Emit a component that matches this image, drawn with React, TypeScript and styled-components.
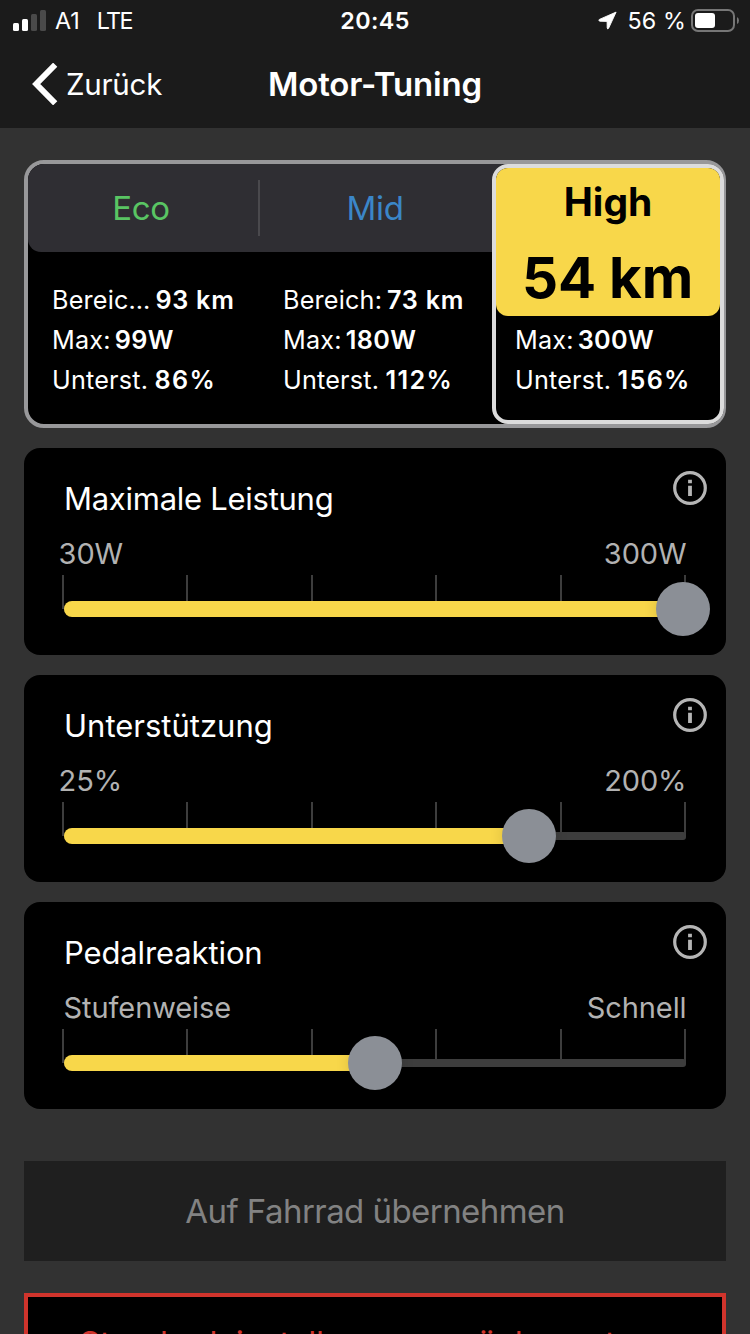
import React from "react";
import styled, { createGlobalStyle } from "styled-components";

const GlobalStyle = createGlobalStyle`
  *, *::before, *::after { box-sizing: border-box; }
  html, body { margin: 0; padding: 0; background: #323232; }
  body {
    height: 1334px;
    overflow: hidden;
    font-family: Inter, "Liberation Sans", sans-serif;
    color: #fff;
    -webkit-font-smoothing: antialiased;
  }
  button { font: inherit; color: inherit; border: 0; background: none; padding: 0; }
`;

const Screen = styled.div`
  width: 750px;
  height: 1334px;
  overflow: hidden;
  display: flex;
  flex-direction: column;
  background: #323232;
  white-space: nowrap;
`;

const Header = styled.header`
  flex: none;
  height: 128px;
  background: #1b1b1b;
`;

const StatusBar = styled.div`
  display: grid;
  grid-template-columns: 1fr auto 1fr;
  height: 41px;
  line-height: 41px;
  font-size: 23.3px;
  padding: 0 11px 0 13px;
`;

const Carrier = styled.div`
  display: flex;
  align-items: center;
`;

const SignalIcon = styled.svg`
  margin: 0 9px 1px 0;
`;

const Network = styled.span`
  margin-left: 17px;
  letter-spacing: -1.6px;
`;

const Clock = styled.div`
  padding-right: 2px;
  font-weight: 600;
  letter-spacing: 0.4px;
`;

const Power = styled.div`
  display: flex;
  align-items: center;
  justify-content: flex-end;
`;

const Percent = styled.span`
  margin: 0 5px 0 11px;
  letter-spacing: 0.1px;
`;

const NavBar = styled.nav`
  display: grid;
  grid-template-columns: 1fr auto 1fr;
  align-items: center;
  height: 86px;
  padding: 0 32px;
`;

const BackButton = styled.button`
  display: flex;
  align-items: center;
  gap: 8px;
  font-size: 29.5px;
  letter-spacing: -0.25px;
`;

const Title = styled.h1`
  margin: 0;
  font-size: 33px;
  font-weight: 600;
  letter-spacing: -0.15px;
`;

const Content = styled.main`
  display: flex;
  flex-direction: column;
  padding: 32px 24px 0;
`;

const ModePanel = styled.section`
  flex: none;
  display: grid;
  grid-template-columns: 232px 232px 232px;
  height: 268px;
  border: 4px solid #98989a;
  border-radius: 20px;
  background: #000;
`;

const ModeColumn = styled.div`
  display: flex;
  flex-direction: column;
`;

const ModeTab = styled.button<{ $color: string; $first?: boolean }>`
  position: relative;
  height: 88px;
  padding-right: ${(p) => (p.$first ? "6px" : "2px")};
  border-radius: ${(p) => (p.$first ? "16px 0 0 13px" : "0")};
  background: #2f2e33;
  color: ${(p) => p.$color};
  font-size: 33px;
  letter-spacing: -0.3px;
  text-align: center;

  &::after {
    content: "";
    display: ${(p) => (p.$first ? "block" : "none")};
    position: absolute;
    top: 16px;
    right: 0;
    width: 2px;
    height: 56px;
    background: #4a494d;
  }
`;

const StatList = styled.div<{ $indent: number; $top: number }>`
  display: flex;
  flex-direction: column;
  padding: ${(p) => p.$top}px 0 0 ${(p) => p.$indent}px;
  font-size: 25.2px;
  line-height: 40px;
`;

const Stat = styled.div<{ $gap: number }>`
  display: flex;
  gap: ${(p) => p.$gap}px;
  letter-spacing: 0.2px;
`;

const StatValue = styled.strong<{ $tracking: number }>`
  font-weight: 600;
  letter-spacing: ${(p) => p.$tracking}px;
`;

const ActiveColumn = styled.div`
  display: flex;
  flex-direction: column;
  border-radius: 0 16px 16px 0;
  background: linear-gradient(#2f2e33 88px, #000 88px);
`;

const ActiveMode = styled.div`
  flex: 1;
  overflow: hidden;
  border: 4px solid #dcdcdc;
  border-radius: 16px;
  background: #000;
`;

const ActiveHead = styled.div`
  height: 148px;
  border-radius: 0 0 12px 12px;
  background: #f8d74a;
  color: #000;
  font-weight: 700;
  text-align: center;
`;

const ActiveName = styled.div`
  font-size: 39px;
  line-height: 68px;
`;

const ActiveRange = styled.div`
  padding-right: 1px;
  font-size: 56.5px;
  line-height: 84px;
  letter-spacing: -0.2px;
`;

const SettingCard = styled.section`
  flex: none;
  height: 207px;
  margin-top: 20px;
  padding: 23px 19px 0 38px;
  border-radius: 16px;
  background: #000;
`;

const CardHead = styled.div`
  display: flex;
  justify-content: space-between;
  height: 56px;
`;

const CardTitle = styled.h2<{ $tracking: number }>`
  margin: 0 0 0 2px;
  font-size: 31px;
  font-weight: 400;
  line-height: 56px;
  letter-spacing: ${(p) => p.$tracking}px;
`;

const InfoIcon = styled.svg`
  flex: none;
`;

const RangeLabels = styled.div<{ $indent: number }>`
  display: flex;
  justify-content: space-between;
  height: 48px;
  padding: 0 20.5px 0 ${(p) => p.$indent}px;
  margin-left: -3.4px;
  font-size: 29px;
  line-height: 53px;
  letter-spacing: -0.1px;
  color: #b2b2b2;
`;

const Slider = styled.div`
  position: relative;
  width: 624px;
  height: 61px;
`;

const Ticks = styled.div`
  display: flex;
  justify-content: space-between;
  height: 34px;
`;

const Tick = styled.i`
  width: 2px;
  background: #3d3d3d;
`;

const Track = styled.div`
  position: absolute;
  left: 2px;
  right: 0;
  top: 30px;
  height: 8px;
  border-radius: 3px;
  background: #3d3d3d;
`;

const Fill = styled.div`
  position: absolute;
  left: 2px;
  top: 26px;
  height: 16px;
  border-radius: 8px;
  background: #f8d74a;
`;

const Thumb = styled.div`
  position: absolute;
  top: 7px;
  width: 54px;
  height: 54px;
  margin-left: -27px;
  border-radius: 50%;
  background: #8b8f96;
  box-shadow: 0 0 14px rgba(0, 0, 0, 0.12);
`;

const ApplyButton = styled.button`
  flex: none;
  height: 100px;
  margin-top: 52px;
  background: #1f1f1f;
  color: #828282;
  font-size: 33px;
  line-height: 100px;
  letter-spacing: -0.56px;
`;

const ResetButton = styled.button`
  flex: none;
  height: 100px;
  margin-top: 32px;
  border: 4px solid #d0342c;
  background: #000;
  color: #d0342c;
  font-size: 33px;
  line-height: 92px;
  letter-spacing: -0.42px;
`;

interface StatEntry {
  label: string;
  value: string;
}

// Value spacing depends on the unit that follows the digits.
function unitSpacing(value: string) {
  if (value.endsWith("%")) return { gap: 6.4, tracking: 1.3 };
  if (value.endsWith("W")) return { gap: 4, tracking: 0.35 };
  return { gap: 4.8, tracking: 0.75 };
}

function Stats({ rows, indent, top }: { rows: StatEntry[]; indent: number; top: number }) {
  return (
    <StatList $indent={indent} $top={top}>
      {rows.map(({ label, value }) => {
        const { gap, tracking } = unitSpacing(value);
        return (
          <Stat key={label} $gap={gap}>
            <span>{label}</span>
            <StatValue $tracking={tracking}>{value}</StatValue>
          </Stat>
        );
      })}
    </StatList>
  );
}

interface SettingProps {
  title: string;
  min: string;
  max: string;
  position: number;
  indent?: number;
  tracking?: number;
}

function Setting({ title, min, max, position, indent = 0, tracking = 0 }: SettingProps) {
  return (
    <SettingCard>
      <CardHead>
        <CardTitle $tracking={tracking}>{title}</CardTitle>
        <InfoIcon width="34" height="34" viewBox="0 0 34 34" fill="none">
          <circle cx="17" cy="17" r="15.3" stroke="#b5b5b5" strokeWidth="3.2" />
          <path d="M15.1 8.8h3.8v3.4h-3.8zM15.1 14.8h3.8v10.2h-3.8z" fill="#b5b5b5" />
        </InfoIcon>
      </CardHead>
      <RangeLabels $indent={indent}>
        <span>{min}</span>
        <span>{max}</span>
      </RangeLabels>
      <Slider>
        <Ticks>
          {[0, 1, 2, 3, 4, 5].map((n) => (
            <Tick key={n} />
          ))}
        </Ticks>
        <Track />
        <Fill style={{ width: position }} />
        <Thumb style={{ left: position }} />
      </Slider>
    </SettingCard>
  );
}

export default function App() {
  return (
    <>
      <GlobalStyle />
      <Screen>
        <Header>
          <StatusBar>
            <Carrier>
              <SignalIcon width="33" height="21" viewBox="0 0 33 21">
                <rect x="0" y="13" width="6" height="8" rx="1.5" fill="#fff" />
                <rect x="9" y="9" width="6" height="12" rx="1.5" fill="#fff" />
                <rect x="18" y="4" width="6" height="17" rx="1.5" fill="#4a4a4a" />
                <rect x="27" y="0" width="6" height="21" rx="1.5" fill="#4a4a4a" />
              </SignalIcon>
              <span>A1</span>
              <Network>LTE</Network>
            </Carrier>
            <Clock>20:45</Clock>
            <Power>
              <svg width="19" height="19" viewBox="0 0 19 19">
                <path
                  d="M18.1 1.1 10.6 17.3q-1 1.5-1.4-.3l-.1-6.6L1.9 10.2Q-.1 9.5 1.4 8.4Z"
                  fill="#fff"
                  stroke="#fff"
                  strokeWidth=".9"
                  strokeLinejoin="round"
                />
              </svg>
              <Percent>56 %</Percent>
              <svg width="48" height="23" viewBox="0 0 48 23">
                <rect x="1" y="1" width="42" height="21" rx="6" fill="none" stroke="#767676" strokeWidth="2" />
                <rect x="4" y="4" width="20" height="15" rx="3" fill="#fff" />
                <path d="M46 8q2 1 2 3.5T46 15z" fill="#767676" />
              </svg>
            </Power>
          </StatusBar>
          <NavBar>
            <BackButton>
              <svg width="26" height="42" viewBox="0 0 26 42" fill="none">
                <path d="M23.2 1.7 4.2 21l19 19.3" stroke="#fff" strokeWidth="5.9" />
              </svg>
              <span>Zurück</span>
            </BackButton>
            <Title>Motor-Tuning</Title>
          </NavBar>
        </Header>
        <Content>
          <ModePanel>
            <ModeColumn>
              <ModeTab $color="#59c563" $first>
                Eco
              </ModeTab>
              <Stats
                indent={24}
                top={28}
                rows={[
                  { label: "Bereic…", value: "93 km" },
                  { label: "Max:", value: "99W" },
                  { label: "Unterst.", value: "86%" },
                ]}
              />
            </ModeColumn>
            <ModeColumn>
              <ModeTab $color="#3b86c8">Mid</ModeTab>
              <Stats
                indent={23}
                top={28}
                rows={[
                  { label: "Bereich:", value: "73 km" },
                  { label: "Max:", value: "180W" },
                  { label: "Unterst.", value: "112%" },
                ]}
              />
            </ModeColumn>
            <ActiveColumn>
              <ActiveMode>
                <ActiveHead>
                  <ActiveName>High</ActiveName>
                  <ActiveRange>54 km</ActiveRange>
                </ActiveHead>
                <Stats
                  indent={19}
                  top={4}
                  rows={[
                    { label: "Max:", value: "300W" },
                    { label: "Unterst.", value: "156%" },
                  ]}
                />
              </ActiveMode>
            </ActiveColumn>
          </ModePanel>
          <Setting title="Maximale Leistung" min="30W" max="300W" position={621} tracking={-0.27} />
          <Setting title="Unterstützung" min="25%" max="200%" position={467} />
          <Setting
            title="Pedalreaktion"
            min="Stufenweise"
            max="Schnell"
            position={313}
            indent={5}
            tracking={-0.12}
          />
          <ApplyButton>Auf Fahrrad übernehmen</ApplyButton>
          <ResetButton>Standardeinstellungen zurückzusetzen</ResetButton>
        </Content>
      </Screen>
    </>
  );
}
